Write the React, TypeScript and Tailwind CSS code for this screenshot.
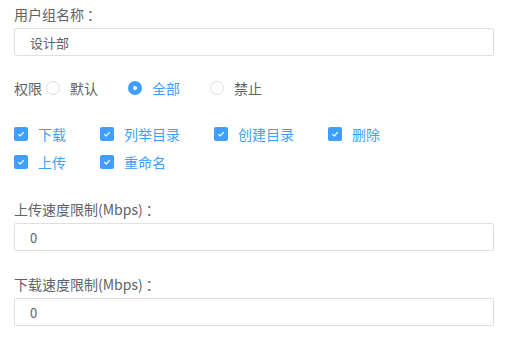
import { useState } from 'react';

const font = { fontFamily: '"Noto Sans CJK SC", "Liberation Sans", sans-serif' };

function Radio({ label, checked, onClick }: { label: string; checked: boolean; onClick: () => void }) {
  return (
    <label onClick={onClick} className="flex items-center mr-[30px] cursor-pointer">
      {checked ? (
        <span className="w-[14px] h-[14px] rounded-full bg-[#409eff] flex items-center justify-center">
          <span className="w-[4px] h-[4px] rounded-full bg-white" />
        </span>
      ) : (
        <span className="w-[14px] h-[14px] rounded-full border border-[#dcdfe6] bg-white" />
      )}
      <span className={`ml-[10px] text-[14px] ${checked ? 'text-[#409eff]' : 'text-[#606266]'}`}>{label}</span>
    </label>
  );
}

function Check({ label }: { label: string }) {
  return (
    <label className="flex items-center h-[20px] mr-[34px]">
      <span className="w-[14px] h-[14px] rounded-[2px] bg-[#409eff] flex items-center justify-center">
        <svg width="10" height="10" viewBox="0 0 10 10" fill="none">
          <path d="M2.3 5.2 L4.3 7 L7.8 3.2" stroke="white" strokeWidth="1.2" />
        </svg>
      </span>
      <span className="ml-[10px] text-[14px] text-[#409eff]">{label}</span>
    </label>
  );
}

function Field({ label, value }: { label: string; value: string }) {
  return (
    <div className="flex flex-col gap-[4px]">
      <div className="h-[20px] leading-[20px] text-[14px] text-[#606266]">
        {label}
        <span className="ml-[3px]">：</span>
      </div>
      <input
        readOnly
        value={value}
        className="h-[28px] w-[480px] border border-[#dcdfe6] rounded-[2px] px-[15px] text-[13px] text-[#606266] outline-none"
        style={font}
      />
    </div>
  );
}

export default function App() {
  const [perm, setPerm] = useState('all');

  return (
    <div className="w-[510px] h-[338px] bg-white pl-[14px] pt-[4px] flex flex-col" style={font}>
      <Field label="用户组名称" value="设计部" />

      <div className="flex items-center h-[20px] mt-[22px]">
        <span className="text-[14px] text-[#606266] mr-[4px]">权限</span>
        <Radio label="默认" checked={perm === 'default'} onClick={() => setPerm('default')} />
        <Radio label="全部" checked={perm === 'all'} onClick={() => setPerm('all')} />
        <Radio label="禁止" checked={perm === 'deny'} onClick={() => setPerm('deny')} />
      </div>

      <div className="flex flex-wrap gap-y-[8px] mt-[26px] w-[480px]">
        <Check label="下载" />
        <Check label="列举目录" />
        <Check label="创建目录" />
        <Check label="删除" />
      </div>
      <div className="flex mt-[8px]">
        <Check label="上传" />
        <Check label="重命名" />
      </div>

      <div className="mt-[27px]">
        <Field label="上传速度限制(Mbps)" value="0" />
      </div>
      <div className="mt-[23px]">
        <Field label="下载速度限制(Mbps)" value="0" />
      </div>
    </div>
  );
}
